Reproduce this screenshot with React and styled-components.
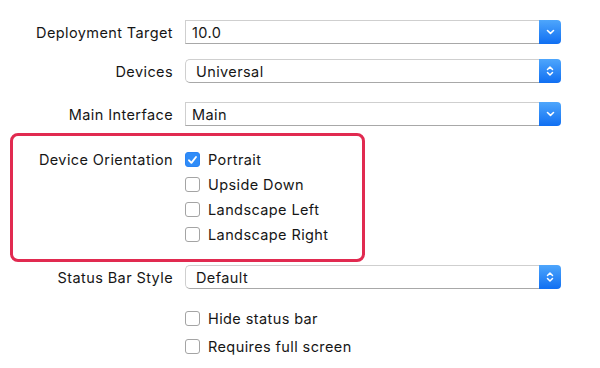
import React from "react";
import styled, { createGlobalStyle } from "styled-components";

const GlobalStyle = createGlobalStyle`
  html, body {
    margin: 0;
    padding: 0;
    background: #fff;
  }
  body {
    font-family: Inter, "Liberation Sans", sans-serif;
    color: #161616;
    -webkit-font-smoothing: antialiased;
  }
`;

const Page = styled.div`
  width: 600px;
  height: 368px;
  padding-top: 20px;
  box-sizing: border-box;
  overflow: hidden;
  font-size: 14.5px;
  letter-spacing: 0.4px;
`;

const Row = styled.div`
  display: grid;
  grid-template-columns: ${(p) => p.$labelWidth ?? 173}px 376px;
  column-gap: 12px;
  align-items: ${(p) => (p.$top ? "start" : "center")};
  margin-top: ${(p) => p.$mt ?? 0}px;
`;

const Label = styled.div`
  text-align: right;
  white-space: nowrap;
  line-height: ${(p) => (p.$top ? "25px" : "normal")};
`;

const Field = styled.div`
  display: flex;
  height: 24px;
`;

const FieldBody = styled.div`
  flex: 1;
  display: flex;
  align-items: center;
  box-sizing: border-box;
  border: 1px solid #cfcfcf;
  border-bottom-color: #a8a8a8;
  border-right: none;
  border-radius: ${(p) => (p.$popup ? "5px 0 0 5px" : "0")};
  padding-left: ${(p) => (p.$popup ? 10 : 6)}px;
  background: #fff;
`;

const BlueButton = styled.div`
  width: 22px;
  display: flex;
  align-items: center;
  justify-content: center;
  background: linear-gradient(#4ea6fc, #106ff2);
  border-radius: 0 4px 4px 0;
`;

const Highlight = styled.div`
  margin: 7px 0 3px 10px;
  width: 355px;
  box-sizing: border-box;
  border: 3px solid #e12a50;
  border-radius: 8px;
  padding: 11px 0 12px;
`;

const CheckList = styled.div`
  display: flex;
  flex-direction: column;
  margin-top: ${(p) => p.$mt ?? 0}px;
`;

const CheckRow = styled.label`
  display: flex;
  align-items: center;
  gap: 8px;
  height: ${(p) => p.$h ?? 25}px;
`;

const Box = styled.span`
  width: 15px;
  height: 15px;
  flex-shrink: 0;
  box-sizing: border-box;
  border-radius: 3px;
  border: 1px solid ${(p) => (p.$checked ? "#2a84f4" : "#a4a4a4")};
  background: ${(p) => (p.$checked ? "#2f8cf8" : "#fff")};
  display: flex;
  align-items: center;
  justify-content: center;
`;

const ChevronDown = () => (
  <svg width="9" height="6" viewBox="0 0 9 6">
    <path d="M1.5 1.5 L4.5 4.3 L7.5 1.5" fill="none" stroke="#fff" strokeWidth="1.6" strokeLinecap="round" strokeLinejoin="round" />
  </svg>
);

const ChevronUpDown = () => (
  <svg width="8" height="12" viewBox="0 0 8 12">
    <path d="M1.5 4.5 L4 2 L6.5 4.5 M1.5 7.5 L4 10 L6.5 7.5" fill="none" stroke="#fff" strokeWidth="1.5" strokeLinecap="round" strokeLinejoin="round" />
  </svg>
);

const Check = () => (
  <svg width="11" height="10" viewBox="0 0 11 10">
    <path d="M2 5.3 L4.4 7.8 L9 2" fill="none" stroke="#fff" strokeWidth="1.9" strokeLinecap="round" strokeLinejoin="round" />
  </svg>
);

const Combo = ({ value }) => (
  <Field>
    <FieldBody>{value}</FieldBody>
    <BlueButton>
      <ChevronDown />
    </BlueButton>
  </Field>
);

const Popup = ({ value }) => (
  <Field>
    <FieldBody $popup>{value}</FieldBody>
    <BlueButton>
      <ChevronUpDown />
    </BlueButton>
  </Field>
);

const Checkbox = ({ checked, children, h }) => (
  <CheckRow $h={h}>
    <Box $checked={checked}>{checked && <Check />}</Box>
    {children}
  </CheckRow>
);

const orientations = [
  { name: "Portrait", checked: true },
  { name: "Upside Down", checked: false },
  { name: "Landscape Left", checked: false },
  { name: "Landscape Right", checked: false },
];

const App = () => {
  return (
    <Page>
      <GlobalStyle />
      <Row>
        <Label>Deployment Target</Label>
        <Combo value="10.0" />
      </Row>
      <Row $mt={15}>
        <Label>Devices</Label>
        <Popup value="Universal" />
      </Row>
      <Row $mt={19}>
        <Label>Main Interface</Label>
        <Combo value="Main" />
      </Row>
      <Highlight>
        <Row $labelWidth={160} $top>
          <Label $top>Device Orientation</Label>
          <CheckList>
            {orientations.map((o) => (
              <Checkbox key={o.name} checked={o.checked}>
                {o.name}
              </Checkbox>
            ))}
          </CheckList>
        </Row>
      </Highlight>
      <Row>
        <Label>Status Bar Style</Label>
        <Popup value="Default" />
      </Row>
      <Row $top>
        <div />
        <CheckList $mt={15}>
          <Checkbox h={28}>Hide status bar</Checkbox>
          <Checkbox h={28}>Requires full screen</Checkbox>
        </CheckList>
      </Row>
    </Page>
  );
};

export default App;
